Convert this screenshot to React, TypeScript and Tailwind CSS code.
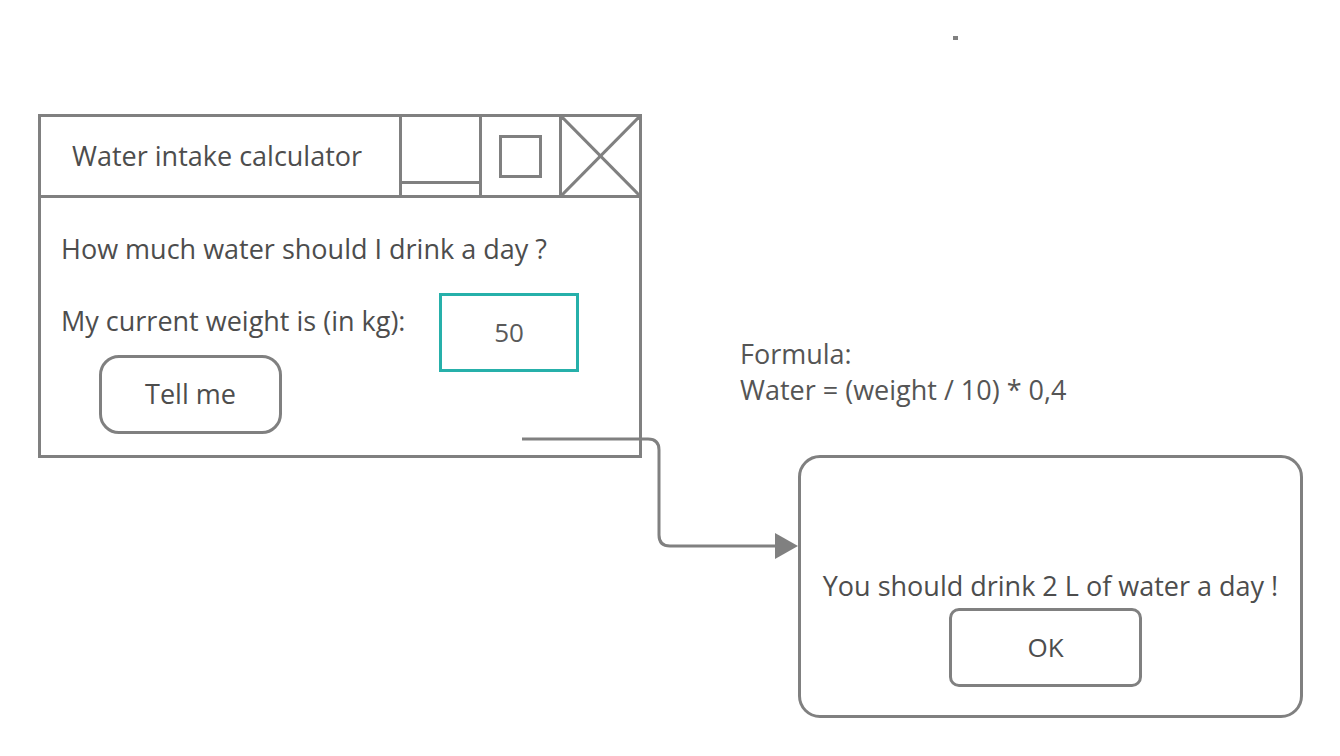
export default function App() {
  return (
    <div
      className="relative w-[1340px] h-[756px] bg-white overflow-hidden text-[#4d4d4d]"
      style={{ fontFamily: '"Open Sans", "Noto Sans", sans-serif' }}
    >
      {/* stray dot */}
      <div className="absolute left-[953px] top-[36px] w-[5px] h-[4px] bg-[#808080]" />

      {/* calculator window */}
      <div className="absolute left-[38px] top-[114px] w-[604px] h-[344px] border-[3px] border-[#808080] flex flex-col">
        <div className="h-[81px] flex border-b-[3px] border-[#808080]">
          <div className="flex-1 flex items-center pl-[31px] text-[27px]">Water intake calculator</div>
          <div className="w-[80px] border-l-[3px] border-[#808080] flex flex-col justify-end pb-[11px]">
            <div className="h-[3px] bg-[#808080]" />
          </div>
          <div className="w-[80px] border-l-[3px] border-[#808080] flex items-center justify-center">
            <div className="w-[43px] h-[43px] border-[3px] border-[#808080]" />
          </div>
          <div className="w-[80px] border-l-[3px] border-[#808080]">
            <svg width="77" height="78" viewBox="0 0 77 78">
              <line x1="0" y1="0" x2="77" y2="78" stroke="#808080" strokeWidth="3" />
              <line x1="77" y1="0" x2="0" y2="78" stroke="#808080" strokeWidth="3" />
            </svg>
          </div>
        </div>
        <div className="flex-1 relative pl-[20px]">
          <div className="mt-[34px] text-[27px] leading-[34px]">How much water should I drink a day ?</div>
          <div className="mt-[38px] text-[27px] leading-[34px]">My current weight is (in kg):</div>
          <div className="absolute left-[398px] top-[95px] w-[140px] h-[79px] border-[3px] border-[#26b0aa] flex items-center justify-center text-[26px] text-[#5a5a5a]">
            50
          </div>
          <div className="ml-[38px] mt-[17px] w-[183px] h-[79px] border-[3px] border-[#808080] rounded-[20px] flex items-center justify-center text-[27px]">
            Tell me
          </div>
        </div>
      </div>

      {/* connector */}
      <svg className="absolute left-0 top-0" width="1340" height="756" viewBox="0 0 1340 756">
        <path
          d="M522 439 H648 Q659 439 659 450 V535 Q659 546 670 546 H778"
          fill="none"
          stroke="#808080"
          strokeWidth="3"
        />
        <polygon points="775,533 798,546 775,559" fill="#808080" />
      </svg>

      {/* formula note */}
      <div className="absolute left-[740px] top-[336px] text-[27px] leading-[36px] text-[#555]">
        <div>Formula:</div>
        <div>Water = (weight / 10) * 0,4</div>
      </div>

      {/* result dialog */}
      <div className="absolute left-[798px] top-[455px] w-[505px] h-[263px] border-[3px] border-[#808080] rounded-[22px] flex flex-col items-center">
        <div className="mt-[111px] text-[27px] leading-[34px]">You should drink 2 L of water a day !</div>
        <div className="mt-[5px] ml-[-10px] w-[193px] h-[79px] border-[3px] border-[#808080] rounded-[10px] flex items-center justify-center text-[26px]">
          OK
        </div>
      </div>
    </div>
  );
}
